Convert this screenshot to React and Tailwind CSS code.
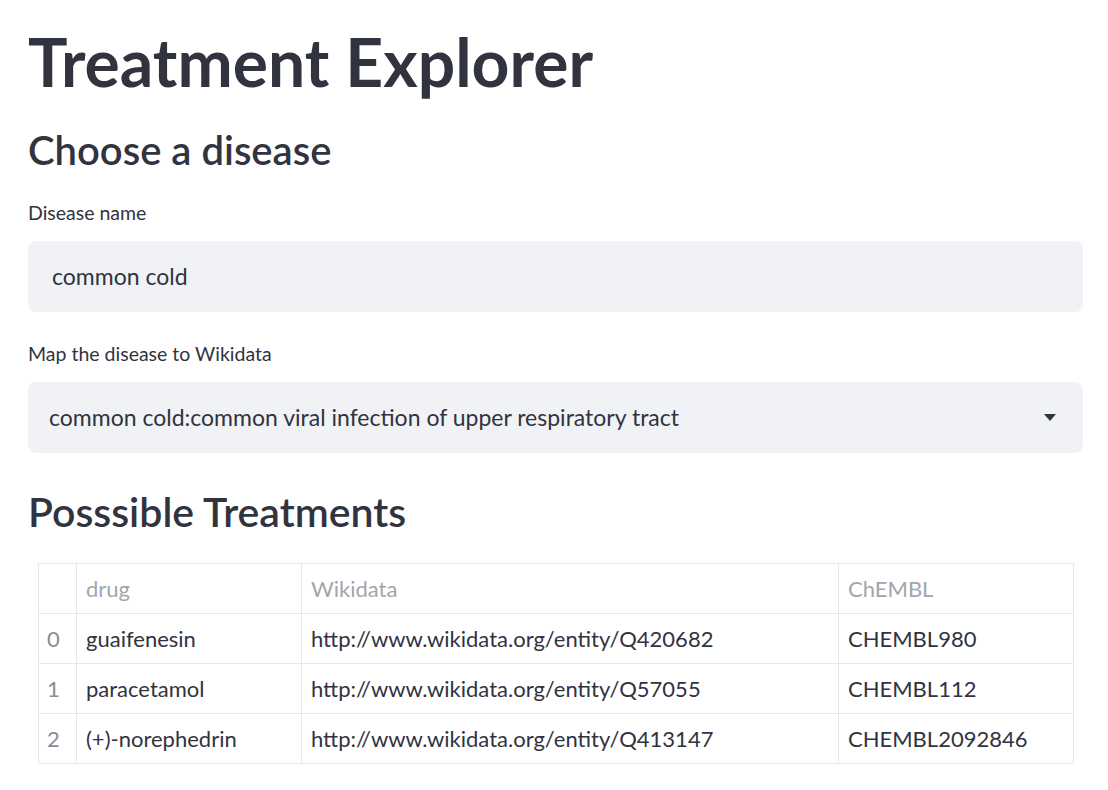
const ROWS = [
  { idx: 0, drug: 'guaifenesin', wiki: 'http://www.wikidata.org/entity/Q420682', chembl: 'CHEMBL980' },
  { idx: 1, drug: 'paracetamol', wiki: 'http://www.wikidata.org/entity/Q57055', chembl: 'CHEMBL112' },
  { idx: 2, drug: '(+)-norephedrin', wiki: 'http://www.wikidata.org/entity/Q413147', chembl: 'CHEMBL2092846' },
];

const font = { fontFamily: 'Lato, "Noto Sans", sans-serif' };

export default function App() {
  return (
    <div className="min-h-screen bg-white text-[#31333f]" style={font}>
      <div className="pl-[28px] pr-[25px] pt-[22px] pb-8">
        <h1 className="text-[66px] font-bold leading-[80px]">Treatment Explorer</h1>

        <h2 className="mt-[22px] text-[40px] font-semibold leading-[52px]">Choose a disease</h2>

        <label className="mt-[25px] block text-[19.5px] leading-[24px]">Disease name</label>
        <div className="mt-[16px] flex h-[71px] items-center rounded-lg bg-[#f0f2f6] pl-[24px] text-[23px]">
          common cold
        </div>

        <label className="mt-[30px] block text-[19.5px] leading-[24px]">Map the disease to Wikidata</label>
        <div className="mt-[16px] flex h-[71px] items-center justify-between rounded-lg bg-[#f0f2f6] pl-[21px] pr-[27px] text-[23px]">
          <span>common cold:common viral infection of upper respiratory tract</span>
          <svg width="12" height="7" viewBox="0 0 12 7" className="fill-[#31333f]">
            <path d="M0 0h12L6 7z" />
          </svg>
        </div>

        <h2 className="mt-[33px] text-[41px] font-semibold leading-[52px]">Posssible Treatments</h2>

        <div className="mt-[25px] ml-[10px] w-[1036px]">
          <table className="w-full border-collapse border border-[#e6e7ea] text-[22px]">
            <thead>
              <tr className="h-[50px] text-[#a3a5ad]">
                <th className="w-[38px] border border-[#e6e7ea]"></th>
                <th className="w-[225px] border border-[#e6e7ea] px-[9px] text-left font-normal">drug</th>
                <th className="w-[537px] border border-[#e6e7ea] px-[9px] text-left font-normal">Wikidata</th>
                <th className="border border-[#e6e7ea] px-[9px] text-left font-normal">ChEMBL</th>
              </tr>
            </thead>
            <tbody>
              {ROWS.map((r) => (
                <tr key={r.idx} className="h-[50px]">
                  <td className="border border-[#e6e7ea] px-[8px] text-[#8b8c93]">{r.idx}</td>
                  <td className="border border-[#e6e7ea] px-[9px]">{r.drug}</td>
                  <td className="border border-[#e6e7ea] px-[9px]">{r.wiki}</td>
                  <td className="border border-[#e6e7ea] px-[9px]">{r.chembl}</td>
                </tr>
              ))}
            </tbody>
          </table>
        </div>
      </div>
    </div>
  );
}
